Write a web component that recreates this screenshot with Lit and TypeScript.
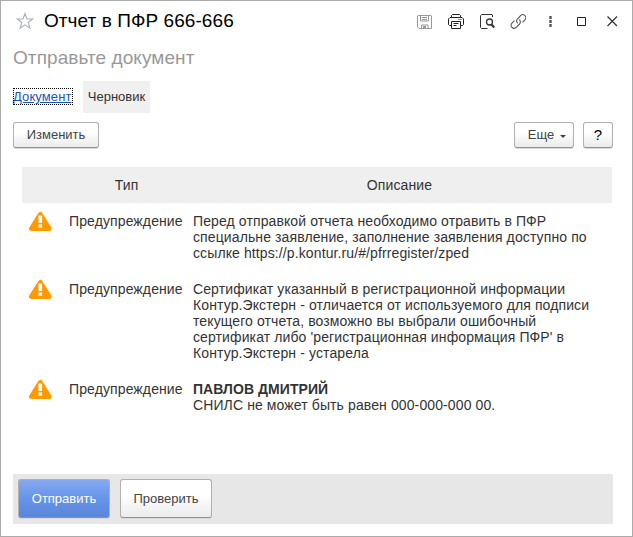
import { LitElement, html, css, svg } from "lit";
import { customElement } from "lit/decorators.js";

interface Notice {
  kind: string;
  title?: string;
  lines: string[];
}

const notices: Notice[] = [
  {
    kind: "Предупреждение",
    lines: [
      "Перед отправкой отчета необходимо отравить в ПФР",
      "специальне заявление, заполнение заявления доступно по",
      "ссылке https://p.kontur.ru/#/pfrregister/zped",
    ],
  },
  {
    kind: "Предупреждение",
    lines: [
      "Сертификат указанный в регистрационной информации",
      "Контур.Экстерн - отличается от используемого для подписи",
      "текущего отчета, возможно вы выбрали ошибочный",
      "сертификат либо 'регистрационная информация ПФР' в",
      "Контур.Экстерн - устарела",
    ],
  },
  {
    kind: "Предупреждение",
    title: "ПАВЛОВ ДМИТРИЙ",
    lines: ["СНИЛС не может быть равен 000-000-000 00."],
  },
];

const toolIcons = [
  svg`<g stroke="#999"><path d="M1 2.500h13l.5.500v12.500h-12.500l-1.500-1.500v-11z"/><path d="M3.500 2.500v5.500h8v-5.500M5 4.500h5M5 6.500h5M4.500 15.500v-3.500h6.500v3.500"/><path d="M6 13h3v2H6z" fill="#999" stroke="none"/></g>`,
  svg`<g stroke="#222"><path d="M3.500 4.500v-2l1-1h7l1 1v2"/><path d="M3.500 12.500h-2l-1-1v-5.500l1.500-1.500h12l1.500 1.500v5.500l-1 1h-2"/><path d="M3.500 8.500h9v7h-9zM5.500 10.500h5M5.500 12.500h3M10.500 6.500h1M12.500 6.500h1"/></g>`,
  svg`<g stroke="#333"><path d="M13.500 4v-2l-.5-.5h-10.500l-1 1v12l1 1h6"/><circle cx="10.500" cy="9" r="3" stroke-width="1.300"/><path d="M12.500 11.500l2.800 3" stroke-width="2.200"/></g>`,
  svg`<g stroke="#555" stroke-width="1.100"><path d="M7.800 10.300a3 3 0 0 1-.5-4.300l3.300-3.400a3 3 0 0 1 4.300 4.200l-2.400 2.500"/><path d="M9.200 6.600a3 3 0 0 1 .4 4.400l-3.400 3.400a3 3 0 0 1-4.300-4.200l2.500-2.500"/></g>`,
  svg`<path d="M8 3h3v3H8zM8 7h3v3H8zM8 11h3v3H8z" fill="#888" stroke="none"/><path d="M9 3h1v3H9zM9 7h1v3H9zM9 11h1v3H9z" fill="#555" stroke="none"/>`,
  svg`<path d="M5.500 4.500h8v8h-8z" stroke="#222"/>`,
  svg`<path d="M4.500 3.500l9.500 9.500M14 3.500l-9.500 9.500" stroke="#333" stroke-width="1.200"/>`,
];

@customElement("app-root")
export class AppRoot extends LitElement {
  static styles = css`
    :host {
      display: block;
      box-sizing: border-box;
      width: 633px;
      height: 537px;
      border: 1px solid #ababab;
      background: #fff;
      color: #333;
      font: 13px/16px "Liberation Sans", Arial, sans-serif;
      overflow: hidden;
    }
    * { box-sizing: border-box; }
    svg { display: block; fill: none; }
    .titlebar {
      display: flex;
      align-items: center;
      height: 40px;
      padding: 0 12px 0 15px;
    }
    .title {
      flex: 1;
      margin-left: 10px;
      font-size: 19px;
      line-height: 22px;
      letter-spacing: 0.07px;
      color: #000;
      white-space: nowrap;
    }
    .tools { display: flex; gap: 15px; margin-right: 1px; }
    .subtitle {
      height: 40px;
      padding: 6px 12px 0;
      font-size: 19px;
      line-height: 22px;
      letter-spacing: 0.08px;
      color: #999;
    }
    .tabs {
      display: flex;
      align-items: center;
      gap: 10px;
      height: 32px;
      padding-left: 12px;
    }
    .link {
      width: 60px;
      height: 17px;
      outline: 1px dotted #000;
      outline-offset: -1px;
      margin-top: -1px;
      line-height: 17px;
      letter-spacing: 0.1px;
      color: #1a54b8;
      text-decoration: underline;
      white-space: nowrap;
    }
    .tab {
      width: 67px;
      background: #f0f0f0;
      line-height: 32px;
      text-align: center;
    }
    .commands {
      display: flex;
      gap: 9px;
      margin: 9px 19px 0 12px;
    }
    .button {
      display: flex;
      align-items: center;
      justify-content: center;
      height: 27px;
      border: 1px solid #b0b0b0;
      border-bottom-color: #939393;
      border-radius: 3px;
      background: linear-gradient(#fff 40%, #ebebeb);
      box-shadow: 0 1px 0 #d8d8d8;
      color: #444;
      font: inherit;
      padding: 0;
    }
    .commands .button { height: 26px; padding-bottom: 1px; }
    .edit { width: 86px; margin-right: auto; }
    .commands .more { width: 60px; gap: 6px; padding-left: 6px; }
    .caret {
      margin-top: 4px;
      border: 3px solid transparent;
      border-top-color: #444;
      border-bottom: 0;
    }
    .help { width: 30px; }
    .commands .help { color: #000; font-size: 15px; padding-bottom: 0; }
    .table {
      width: 590px;
      height: 289px;
      margin: 19px 0 0 21px;
      font-size: 14px;
      letter-spacing: 0.11px;
    }
    .row {
      display: grid;
      grid-template-columns: 38px 133px 1fr;
      padding: 10px 0;
    }
    .head {
      height: 36px;
      background: #efefef;
      text-align: center;
    }
    .head span:nth-child(3) { padding-right: 6px; }
    .row svg { margin: -2px 0 0 6px; }
    .kind { padding-left: 9px; }
    .line { white-space: nowrap; }
    b.line { letter-spacing: 0.06px; }
    .footer {
      display: flex;
      gap: 10px;
      width: 600px;
      height: 50px;
      margin: 18px 0 0 12px;
      padding: 5px;
      background: #e7e7e7;
    }
    .footer .button { width: 92px; height: 39px; }
    .footer .primary {
      color: #fff;
      background: linear-gradient(#85aaf0, #6694e9 50%, #5a86da);
    }
  `;

  render() {
    return html`
      <div class="titlebar">
        <svg width="18" height="18" viewBox="0 0 18 18">
          <path d="M9 1.500l2 5.500h5.700l-4.500 3.500 1.700 5.700L9 12.800l-4.900 3.400 1.700-5.700L1.300 7H7z" stroke="#a9b0b8" stroke-width="1.100" />
        </svg>
        <div class="title">Отчет в ПФР 666-666</div>
        <div class="tools">
          ${toolIcons.map((icon) => html`<svg width="16" height="16" viewBox="0 0 16 16">${icon}</svg>`)}
        </div>
      </div>
      <div class="subtitle">Отправьте документ</div>
      <div class="tabs">
        <span class="link">Документ</span>
        <span class="tab">Черновик</span>
      </div>
      <div class="commands">
        <button class="button edit">Изменить</button>
        <button class="button more">Еще<i class="caret"></i></button>
        <button class="button help">?</button>
      </div>
      <div class="table">
        <div class="row head"><span></span><span>Тип</span><span>Описание</span></div>
        ${notices.map(
          (n) => html`
            <div class="row">
              <svg width="25" height="21" viewBox="0 0 25 21">
                <path d="M12.300 3.500L3.500 17.500h17.700z" fill="#f90" stroke="#f90" stroke-width="5" stroke-linejoin="round" />
                <path d="M10.500 4.500h3.600v7.500h-3.600zM10.500 13.500h3.600v3.300h-3.600z" fill="#fff" />
              </svg>
              <span class="kind">${n.kind}</span>
              <div>
                ${n.title ? html`<b class="line">${n.title}</b>` : ""}
                ${n.lines.map((l) => html`<div class="line">${l}</div>`)}
              </div>
            </div>
          `
        )}
      </div>
      <div class="footer">
        <button class="button primary">Отправить</button>
        <button class="button">Проверить</button>
      </div>
    `;
  }
}
